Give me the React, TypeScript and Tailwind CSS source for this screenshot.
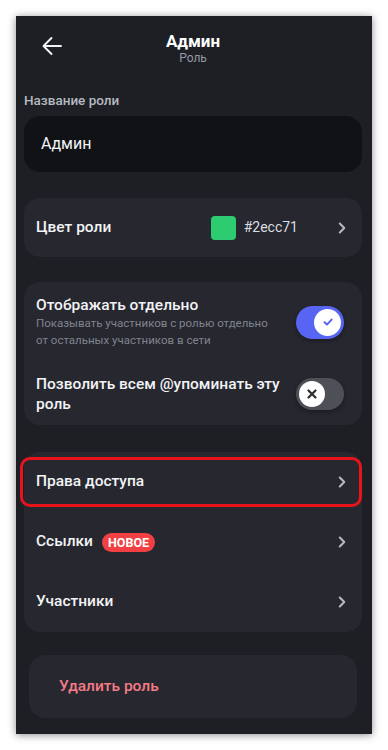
import type { ReactNode } from 'react'

function Chevron(): ReactNode {
  return (
    <svg width="8" height="12" viewBox="0 0 8 12" fill="none" className="shrink-0">
      <path d="M1.8 1.5 6.3 6l-4.5 4.5" stroke="#b5bac1" strokeWidth="2" strokeLinecap="round" strokeLinejoin="round" />
    </svg>
  )
}

function Toggle({ on }: { on: boolean }): ReactNode {
  if (on) {
    return (
      <div className="flex h-[33px] w-[48px] shrink-0 items-center justify-end rounded-full bg-[#5865f2] px-[3px] shadow-[0_2px_4px_rgba(0,0,0,0.3)]">
        <div className="flex h-[27px] w-[27px] items-center justify-center rounded-full bg-white">
          <svg width="12" height="12" viewBox="0 0 12 12" fill="none">
            <path d="M2.5 6.3 5 8.6l4.6-5" stroke="#5865f2" strokeWidth="2" strokeLinecap="round" strokeLinejoin="round" />
          </svg>
        </div>
      </div>
    )
  }
  return (
    <div className="flex h-[32px] w-[48px] shrink-0 items-center justify-start rounded-full bg-[#4e5058] px-[3px] shadow-[0_2px_4px_rgba(0,0,0,0.3)]">
      <div className="flex h-[26px] w-[26px] items-center justify-center rounded-full bg-white">
        <svg width="12" height="12" viewBox="0 0 12 12" fill="none">
          <path d="M2.5 2.5l7 7M9.5 2.5l-7 7" stroke="#2b2d31" strokeWidth="2.2" strokeLinecap="round" />
        </svg>
      </div>
    </div>
  )
}

function NavRow({ label, badge, highlight }: { label: string; badge?: string; highlight?: boolean }): ReactNode {
  return (
    <div className="relative flex h-[60px] items-center justify-between pr-4 pl-3">
      <div className="flex items-center gap-[9px]">
        <span className="text-[15.5px] font-medium text-[#f2f3f5]">{label}</span>
        {badge && (
          <span className="rounded-full bg-[#f23f43] px-[6px] text-[12.5px] font-bold leading-[19px] text-white">
            {badge}
          </span>
        )}
      </div>
      <Chevron />
      {highlight && (
        <div className="absolute top-[5px] right-0 bottom-[5px] left-[-4px] rounded-[10px] border-[3px] border-[#e8141b]" />
      )}
    </div>
  )
}

export default function App(): ReactNode {
  return (
    <div
      className="h-[750px] w-[388px] bg-white p-4"
      style={{ fontFamily: 'Roboto, "Noto Sans", sans-serif' }}
    >
      <div className="flex h-[718px] flex-col bg-[#1e1f25] pr-[10px] pl-2 shadow-[0_1px_8px_rgba(0,0,0,0.45)]">
        {/* header */}
        <div className="relative flex flex-col items-center pt-[15px]">
          <svg
            width="20"
            height="20"
            viewBox="0 0 20 20"
            fill="none"
            className="absolute top-[20px] left-[18px]"
          >
            <path d="M19 10H1.5M9.5 2 1.5 10l8 8" stroke="#f2f3f5" strokeWidth="1.9" strokeLinecap="round" strokeLinejoin="round" />
          </svg>
          <div className="text-[17px] leading-[20px] font-bold text-white">Админ</div>
          <div className="text-[12px] leading-[14px] text-[#949ba4]">Роль</div>
        </div>

        <div className="mt-[27px] text-[13.5px] leading-4 font-medium text-[#b5bac1]">Название роли</div>
        <div className="mt-2 flex h-14 items-center rounded-2xl bg-[#111216] px-[17px] text-[16px] text-[#f2f3f5]">
          Админ
        </div>

        <div className="mt-[26px] flex h-[59px] items-center rounded-2xl bg-[#26272f] pr-4 pl-3">
          <span className="flex-1 text-[15.5px] font-medium text-[#f2f3f5]">Цвет роли</span>
          <div className="h-6 w-[25px] rounded-[4px] bg-[#2ecc71]" />
          <span className="mr-[40px] ml-2 text-[14px] text-[#dbdee1]">#2ecc71</span>
          <Chevron />
        </div>

        <div className="mt-[25px] flex flex-col rounded-2xl bg-[#26272f] pt-[13px] pr-[18px] pb-[11px] pl-3">
          <div className="flex items-center gap-2">
            <div className="flex-1">
              <div className="text-[15.5px] leading-5 font-medium text-[#f2f3f5]">Отображать отдельно</div>
              <div className="max-w-[242px] text-[11.5px] leading-[17px] text-[#80848e]">
                Показывать участников с ролью отдельно от остальных участников в сети
              </div>
            </div>
            <Toggle on />
          </div>
          <div className="mt-[25px] flex items-center gap-2">
            <div className="flex-1 text-[15.5px] leading-5 font-medium text-[#f2f3f5]">
              Позволить всем @упоминать эту роль
            </div>
            <Toggle on={false} />
          </div>
        </div>

        <div className="mt-[27px] flex flex-col rounded-2xl bg-[#26272f]">
          <NavRow label="Права доступа" highlight />
          <NavRow label="Ссылки" badge="НОВОЕ" />
          <NavRow label="Участники" />
        </div>

        <div className="mx-[5px] mt-[23px] flex h-[63px] items-center rounded-2xl bg-[#26272f] px-[30px]">
          <span className="text-[15.5px] font-medium text-[#f57b85]">Удалить роль</span>
        </div>
      </div>
    </div>
  )
}
